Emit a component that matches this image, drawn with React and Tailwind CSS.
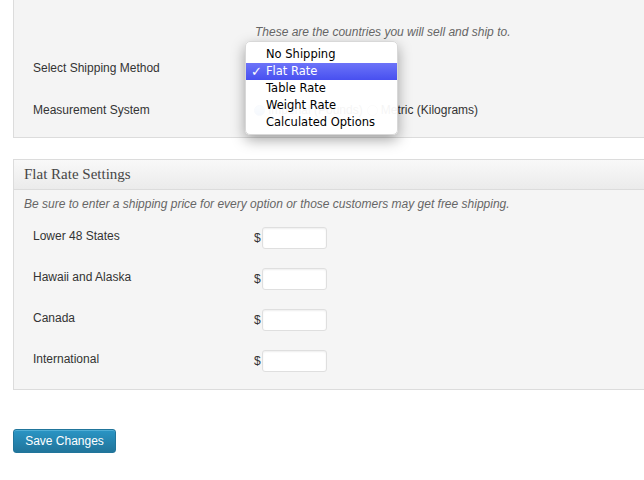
import React from "react";

const rates = ["Lower 48 States", "Hawaii and Alaska", "Canada", "International"];
const methods = ["No Shipping", "Flat Rate", "Table Rate", "Weight Rate", "Calculated Options"];

const Radio = ({ checked }) => (
  <span
    className={
      "inline-block w-[11px] h-[11px] rounded-full border mr-[3px] " +
      (checked
        ? "border-[#6f8fc9] bg-gradient-to-b from-[#9fc2ee] to-[#4d86d8]"
        : "border-[#aaa] bg-white")
    }
  ></span>
);

const App = () => {
  return (
    <div
      className="w-[644px] h-[480px] overflow-hidden bg-white text-[#333] text-[12px]"
      style={{ fontFamily: '"Liberation Sans", Arial, sans-serif' }}
    >
      {/* general settings panel */}
      <div className="ml-[13px] w-[660px] bg-[#f4f4f4] border-l border-b border-[#dcdcdc] pt-[25px] pb-[6px]">
        <div className="pl-[241px] italic text-[#666] leading-[14px]">
          These are the countries you will sell and ship to.
        </div>
        <div className="flex items-center h-[42px] mt-[8px]">
          <div className="pl-[19px] w-[241px]">Select Shipping Method</div>
          <div className="relative">
            <div
              className="absolute left-[-10px] top-[-27px] w-[153px] bg-white/95 rounded-[5px] shadow-[0_5px_14px_rgba(0,0,0,0.35)] border border-[#d8d8d8] pt-[4px] pb-[3px] z-10 text-[11.5px] text-black"
              style={{ fontFamily: '"DejaVu Sans", Verdana, sans-serif' }}
            >
              {methods.map((m) => (
                <div
                  key={m}
                  className={
                    "relative h-[17px] leading-[17px] pl-[20px] " +
                    (m === "Flat Rate"
                      ? "bg-gradient-to-b from-[#6d73f8] to-[#484ff0] text-white"
                      : "")
                  }
                >
                  {m === "Flat Rate" && (
                    <span className="absolute left-[5px] top-0 text-[13px] font-bold">✓</span>
                  )}
                  {m}
                </div>
              ))}
            </div>
          </div>
        </div>
        <div className="flex items-center h-[42px]">
          <div className="pl-[19px] w-[240px]">Measurement System</div>
          <div className="flex items-center">
            <Radio checked />
            <span className="mr-[4px]">Imperial (Pounds)</span>
            <Radio />
            <span>Metric (Kilograms)</span>
          </div>
        </div>
      </div>

      {/* flat rate panel */}
      <div className="ml-[13px] mt-[21px] w-[660px] border-l border-t border-b border-[#dcdcdc] bg-[#f5f5f5]">
        <div className="h-[30px] flex items-center pl-[10px] bg-gradient-to-b from-[#f9f9f9] to-[#ebebeb] border-b border-[#dcdcdc]">
          <h3
            className="text-[15px] text-[#464646]"
            style={{ fontFamily: '"Liberation Serif", Georgia, serif' }}
          >
            Flat Rate Settings
          </h3>
        </div>
        <div className="pt-[7px] pb-[8px]">
          <p className="pl-[10px] italic text-[#666] leading-[14px] mb-[6px]">
            Be sure to enter a shipping price for every option or those customers may get free shipping.
          </p>
          {rates.map((r) => (
            <div key={r} className="flex items-center h-[41px]">
              <div className="pl-[19px] w-[240px] -mt-[3px]">{r}</div>
              <span className="w-[8px]">$</span>
              <input
                type="text"
                className="w-[65px] h-[22px] bg-white border border-[#dfdfdf] rounded-[3px] shadow-[inset_0_1px_2px_rgba(0,0,0,0.07)] outline-none"
              />
            </div>
          ))}
        </div>
      </div>

      <button className="ml-[13px] mt-[39px] w-[103px] h-[24px] rounded-[3px] border border-[#21759b] bg-gradient-to-b from-[#2a95c5] to-[#21759b] text-white text-[12px] shadow-[inset_0_1px_0_rgba(120,200,230,0.5)]">
        Save Changes
      </button>
    </div>
  );
};

export default App;
